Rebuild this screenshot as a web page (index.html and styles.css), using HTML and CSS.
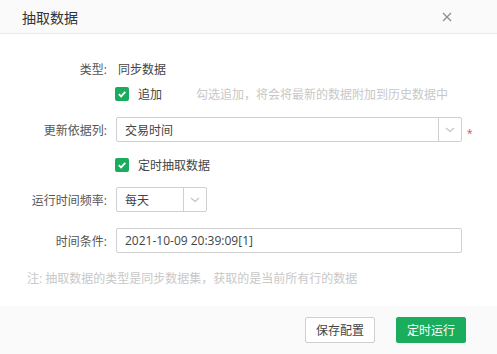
FILE: index.html
```html
<!DOCTYPE html>
<html lang="zh-CN">
  <head>
    <meta charset="UTF-8" />
    <meta name="viewport" content="width=device-width, initial-scale=1.0" />
    <title>抽取数据</title>
    <link rel="stylesheet" href="styles.css">
  </head>
  <body>
    <div class="dialog">
      <div class="dialog-header">
        <span class="dialog-title">抽取数据</span>
        <svg class="close" width="10" height="10" viewBox="0 0 10 10">
          <path d="M1 1L9 9M9 1L1 9" stroke="#8a8a8a" stroke-width="1.2" fill="none" />
        </svg>
      </div>

      <div class="dialog-body">
        <div class="row row-type">
          <label class="label">类型:</label>
          <span class="value">同步数据</span>
        </div>

        <div class="row row-check">
          <span class="label"></span>
          <span class="checkbox">
            <svg width="10" height="10" viewBox="0 0 10 10"><path d="M1.8 5.2L4.1 7.4L8.3 2.8" stroke="#fff" stroke-width="1.8" fill="none" /></svg>
          </span>
          <span class="check-text">追加</span>
          <span class="hint">勾选追加，将会将最新的数据附加到历史数据中</span>
        </div>

        <div class="row row-col">
          <label class="label">更新依据列:</label>
          <div class="select select-wide">
            <span class="select-text">交易时间</span>
            <span class="select-arrow">
              <svg width="10" height="6" viewBox="0 0 10 6"><path d="M1 1L5 4.5L9 1" stroke="#c4c4c4" stroke-width="1.2" fill="none" /></svg>
            </span>
          </div>
          <span class="required">*</span>
        </div>

        <div class="row row-check2">
          <span class="label"></span>
          <span class="checkbox">
            <svg width="10" height="10" viewBox="0 0 10 10"><path d="M1.8 5.2L4.1 7.4L8.3 2.8" stroke="#fff" stroke-width="1.8" fill="none" /></svg>
          </span>
          <span class="check-text">定时抽取数据</span>
        </div>

        <div class="row row-freq">
          <label class="label">运行时间频率:</label>
          <div class="select select-small">
            <span class="select-text">每天</span>
            <span class="select-arrow">
              <svg width="10" height="6" viewBox="0 0 10 6"><path d="M1 1L5 4.5L9 1" stroke="#c4c4c4" stroke-width="1.2" fill="none" /></svg>
            </span>
          </div>
        </div>

        <div class="row row-time">
          <label class="label">时间条件:</label>
          <div class="input">2021-10-09 20:39:09[1]</div>
        </div>

        <p class="note">注: 抽取数据的类型是同步数据集，获取的是当前所有行的数据</p>
      </div>

      <div class="dialog-footer">
        <button class="btn">保存配置</button>
        <button class="btn btn-primary">定时运行</button>
      </div>
    </div>
  </body>
</html>
```

FILE: styles.css
```css
body {
  margin: 0;
  font-family: "Open Sans", "Noto Sans CJK SC", sans-serif;
  font-size: 12px;
  color: #444;
  background: #fff;
}
.dialog {
  width: 497px;
  height: 354px;
  display: flex;
  flex-direction: column;
}
.dialog-header {
  height: 34px;
  background: #fafafa;
  border-bottom: 1px solid #e8e8ef;
  display: flex;
  align-items: center;
  justify-content: space-between;
  padding: 0 45px 0 22px;
  box-sizing: border-box;
}
.dialog-title {
  font-size: 14px;
  color: #333;
}
.close {
  margin-top: 1px;
}
.dialog-body {
  flex: 1;
  padding-top: 22px;
}
.row {
  display: flex;
  align-items: center;
  height: 25px;
}
.label {
  width: 116px;
  text-align: right;
  padding-right: 9px;
  box-sizing: border-box;
  color: #555;
  flex-shrink: 0;
}
.value {
  margin-left: 2px;
  color: #444;
}
.row-col {
  margin-top: 11px;
}
.row-check2 {
  margin-top: 10px;
}
.row-freq {
  margin-top: 10px;
}
.row-time {
  margin-top: 16px;
}
.checkbox {
  width: 14px;
  height: 14px;
  border-radius: 2px;
  background: #1aab5e;
  display: flex;
  align-items: center;
  justify-content: center;
  margin-left: -1px;
}
.check-text {
  margin-left: 9px;
  color: #444;
}
.hint {
  margin-left: 34px;
  color: #c8c8c8;
}
.select {
  height: 25px;
  border: 1px solid #d0d0d0;
  border-radius: 2px;
  box-sizing: border-box;
  display: flex;
  align-items: center;
}
.select-wide {
  width: 346px;
}
.select-small {
  width: 91px;
}
.select-text {
  flex: 1;
  padding-left: 8px;
  color: #444;
}
.select-arrow {
  width: 22px;
  height: 100%;
  border-left: 1px solid #d0d0d0;
  display: flex;
  align-items: center;
  justify-content: center;
}
.required {
  color: #f03a3a;
  font-size: 10px;
  margin-left: 5px;
  margin-top: 6px;
}
.input {
  width: 346px;
  height: 25px;
  border: 1px solid #d0d0d0;
  border-radius: 2px;
  box-sizing: border-box;
  padding-left: 8px;
  line-height: 23px;
  color: #444;
}
.note {
  margin: 16px 0 0 27px;
  color: #c8c8c8;
}
.dialog-footer {
  height: 48px;
  background: #fafafa;
  display: flex;
  align-items: center;
  justify-content: flex-end;
  gap: 21px;
  padding-right: 31px;
}
.btn {
  width: 70px;
  height: 26px;
  font-family: "Open Sans", "Noto Sans CJK SC", sans-serif;
  font-size: 12px;
  color: #444;
  background: #fff;
  border: 1px solid #d0d0d0;
  border-radius: 2px;
  padding: 0;
}
.btn-primary {
  background: #1aad5e;
  border-color: #1aad5e;
  color: #fff;
}
```
